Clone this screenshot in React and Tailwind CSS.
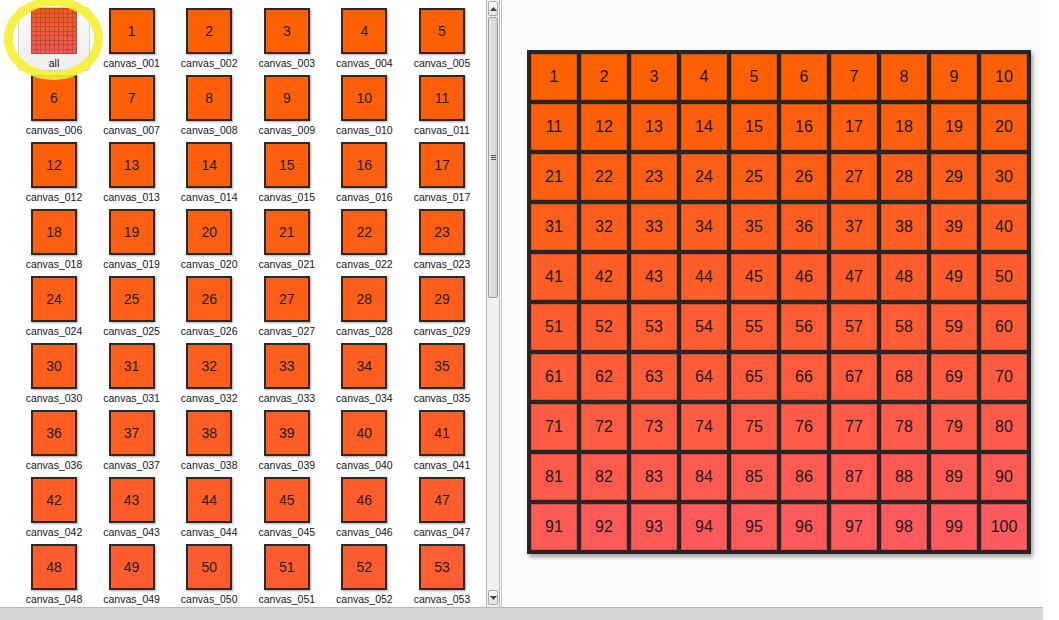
import React from "react";

const col = (i) => {
  const t = (i - 1) / 99;
  const g = Math.round(96 - 6 * t);
  const b = Math.round(95 * t);
  return `rgb(255,${g},${b})`;
};

const pad3 = (n) => String(n).padStart(3, "0");

function Thumb({ n }) {
  return (
    <div className="flex h-[64px] w-[72px] flex-col items-center pt-[1px]">
      <div
        className="flex h-[46px] w-[46px] items-center justify-center border-2 border-[#2a2a2a] text-[14px] text-[#1e1e1e] shadow-[1px_1px_2px_rgba(0,0,0,0.35)]"
        style={{ backgroundColor: col(n) }}
      >
        {n}
      </div>
      <div className="mt-[3px] text-[10.5px] leading-[13px] text-[#151520]">canvas_{pad3(n)}</div>
    </div>
  );
}

function AllThumb() {
  const cells = Array.from({ length: 100 }, (_, i) => i + 1);
  return (
    <div className="flex h-[64px] w-[72px] flex-col items-center rounded-[3px] border border-[#cfcfcf] bg-gradient-to-b from-[#fbfbfb] to-[#eeeeee] pt-0">
      <div className="grid h-[46px] w-[46px] grid-cols-10 gap-[1px] bg-[#b84a3e] p-[1px]">
        {cells.map((c) => (
          <div key={c} style={{ backgroundColor: col(c) }} className="opacity-85" />
        ))}
      </div>
      <div className="mt-[3px] text-[10.5px] leading-[13px] text-[#151520]">all</div>
    </div>
  );
}

export default function App() {
  const items = Array.from({ length: 53 }, (_, i) => i + 1);
  const cells = Array.from({ length: 100 }, (_, i) => i + 1);
  return (
    <div
      className="flex h-[620px] w-[1059px] overflow-hidden bg-white"
      style={{ fontFamily: '"Liberation Sans", Arial, sans-serif' }}
    >
      <div className="flex w-[1043px] flex-col">
        <div className="flex h-[607px]">
          {/* list */}
          <div className="relative h-[607px] w-[486px] overflow-hidden bg-white">
            <div className="grid grid-cols-[repeat(6,72px)] gap-x-[5.6px] gap-y-[3px] pl-[18px] pt-[7px]">
              <AllThumb />
              {items.map((n) => (
                <Thumb key={n} n={n} />
              ))}
            </div>
            <svg className="absolute left-0 top-0" width="120" height="100">
              <ellipse cx="53.5" cy="38.5" rx="45" ry="37" fill="none" stroke="#f6ee32" strokeWidth="9" opacity="0.9" />
            </svg>
          </div>
          {/* scrollbar */}
          <div className="flex w-[14px] flex-col border-x border-[#b9b9b9] bg-[#f0f0f0] px-[1px] py-[1px]">
            <div className="flex h-[15px] items-center justify-center rounded-[2px] border border-[#a9a9a9] bg-gradient-to-b from-[#fbfbfb] to-[#e3e3e3]">
              <svg width="7" height="4" viewBox="0 0 7 4"><path d="M0 4 L3.5 0 L7 4 Z" fill="#444" /></svg>
            </div>
            <div className="mt-[1px] flex h-[281px] items-center justify-center rounded-[2px] border border-[#9e9e9e] bg-gradient-to-r from-[#e9e9e9] via-[#dadada] to-[#d2d2d2]">
              <div className="flex flex-col gap-[1px]">
                <div className="h-px w-[5px] bg-[#5a5050]" />
                <div className="h-px w-[5px] bg-[#5a5050]" />
                <div className="h-px w-[5px] bg-[#5a5050]" />
              </div>
            </div>
            <div className="flex-1" />
            <div className="mb-[1px] flex h-[15px] items-center justify-center rounded-[2px] border border-[#a9a9a9] bg-gradient-to-b from-[#fbfbfb] to-[#e3e3e3]">
              <svg width="7" height="4" viewBox="0 0 7 4"><path d="M0 0 L3.5 4 L7 0 Z" fill="#444" /></svg>
            </div>
          </div>
          <div className="w-px bg-white" />
          <div className="w-px bg-[#c4c4c4]" />
          {/* canvas panel */}
          <div className="flex-1 bg-[#fbfbfb] pl-[25px] pt-[50px]">
            <div className="grid w-[504px] grid-cols-[repeat(10,46px)] gap-[4px] bg-[#262626] p-[4px] shadow-[2px_3px_4px_rgba(0,0,0,0.35)]">
              {cells.map((n) => (
                <div
                  key={n}
                  className="flex h-[46px] items-center justify-center border border-[rgba(0,0,0,0.15)] text-[16px] text-[#1a1a1a]"
                  style={{ backgroundColor: col(n) }}
                >
                  {n}
                </div>
              ))}
            </div>
          </div>
        </div>
        <div className="h-[13px] border-t border-[#b8b8b8] bg-[#d6d6d6]" />
      </div>
      <div className="flex-1 bg-white" />
    </div>
  );
}
